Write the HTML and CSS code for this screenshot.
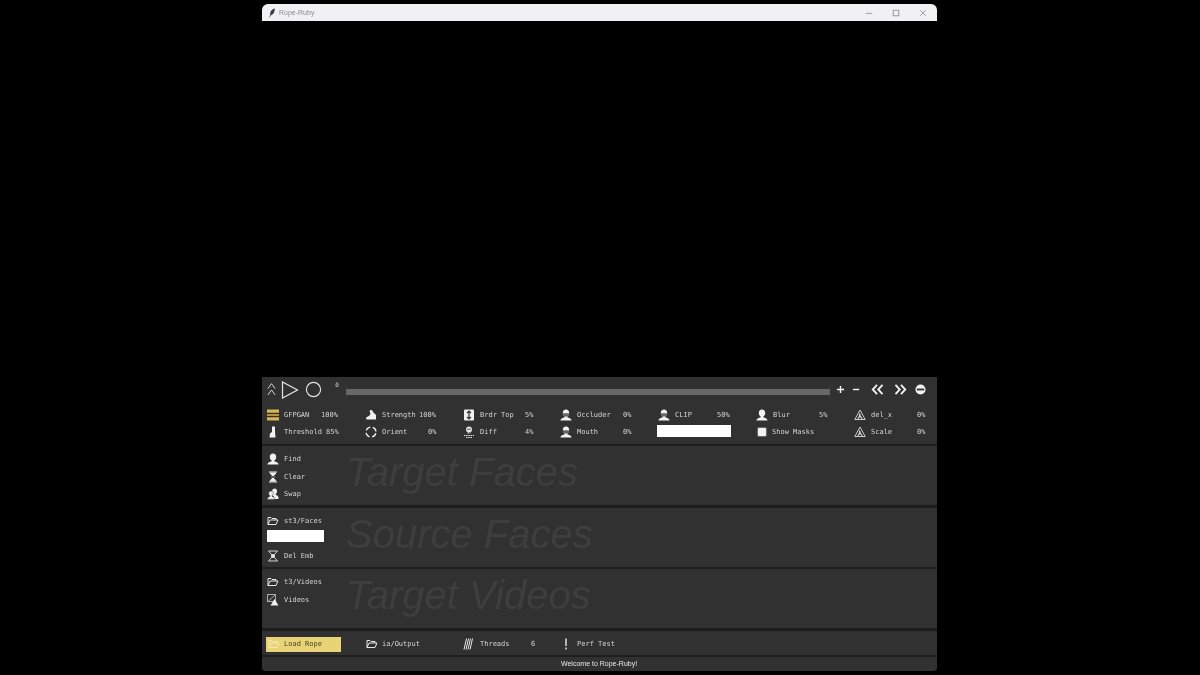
FILE: index.html
```html
<!DOCTYPE html>
<html lang="en">
<head>
<meta charset="utf-8">
<title>Rope-Ruby</title>
<link rel="stylesheet" href="styles.css">
</head>
<body>
<svg class="defs" width="0" height="0" aria-hidden="true">
  <symbol id="person" viewBox="0 0 12 12"><path fill="#f2f2f2" d="M6 .5c2 0 3.200 1.500 3.200 3.400 0 1.600-.8 2.900-1.800 3.400v.9c1.400.5 4.100 1.200 4.100 3.300H.5c0-2.100 2.700-2.800 4.100-3.300v-.9C3.600 6.800 2.800 5.500 2.800 3.900 2.800 2 4 .5 6 .5z"/></symbol>
  <symbol id="masked" viewBox="0 0 12 12"><path fill="#f2f2f2" d="M6 .5c2 0 3.200 1.500 3.200 3.400 0 1.600-.8 2.900-1.800 3.400v.9c1.400.5 4.100 1.200 4.100 3.300H.5c0-2.100 2.700-2.800 4.100-3.300v-.9C3.600 6.800 2.800 5.500 2.800 3.900 2.800 2 4 .5 6 .5z"/><path fill="#666" d="M3 4.200h6v2.300L6 7.800 3 6.500z"/></symbol>
  <symbol id="folder" viewBox="0 0 12 12"><path fill="none" stroke="#e8e8e8" stroke-width="1" d="M1 9.500V2.500h3l1 1h4v1.500M1 9.500l2-4.500h8l-2 4.500z"/></symbol>
  <symbol id="delta" viewBox="0 0 12 12"><path fill="none" stroke="#ddd" stroke-width=".9" d="M6 1 .8 10.500h10.400z"/><path fill="#ddd" d="M5 4.500h1.200l.5 2.500 2.300 2.800H7.500L6 8 4.500 9.800H3.300L5 7z"/></symbol>
  <symbol id="cross" viewBox="0 0 12 12"><path fill="none" stroke="#e8e8e8" stroke-width=".9" d="M1.500 1h9M1.500 11h9M1.500 1l9 10M10.500 1l-9 10"/><circle cx="6" cy="6" r="2" fill="#e8e8e8"/></symbol>
</svg>
<main class="window">
  <header class="titlebar">
    <div class="title">
      <svg class="feather" viewBox="0 0 10 12"><path fill="#3a3a48" d="M8.500.5C5 1 2.500 4 2.800 8L1.500 11.500l.6.2L3.300 9C6.500 8.500 8.500 5 8.500.5z"/></svg>
      <span class="txt">Rope-Ruby</span>
    </div>
    <div class="winbtns">
      <svg viewBox="0 0 10 10"><path stroke="#8a8a8a" d="M1 5.500h8"/></svg>
      <svg viewBox="0 0 10 10"><rect x="1.500" y="1.500" width="7" height="7" fill="none" stroke="#8a8a8a"/></svg>
      <svg viewBox="0 0 10 10"><path stroke="#8a8a8a" d="M1.500 1.500l7 7M8.500 1.500l-7 7"/></svg>
    </div>
  </header>

  <div class="video"></div>

  <section class="transport">
    <div class="play-group">
      <svg class="up" viewBox="0 0 10 16"><path fill="none" stroke="#e6e6e6" d="M1 7l4-5.500L9 7M1 14l4-5.500L9 14"/></svg>
      <svg class="play" viewBox="0 0 18 18"><path fill="none" stroke="#e6e6e6" stroke-width="1.200" d="M1.500 1 16.500 9 1.500 17z"/></svg>
      <svg class="rec" viewBox="0 0 18 18"><circle cx="9" cy="9" r="7.500" fill="none" stroke="#e6e6e6" stroke-width="1.200"/></svg>
    </div>
    <span class="frame txt">0</span>
    <div class="slider"></div>
    <div class="seek-group">
      <svg class="plus" viewBox="0 0 10 10"><path stroke="#f2f2f2" stroke-width="1.600" d="M1 5h8M5 1v8"/></svg>
      <svg class="minus" viewBox="0 0 10 10"><path stroke="#f2f2f2" stroke-width="1.600" d="M1 5h7"/></svg>
      <svg class="jump" viewBox="0 0 14 12"><path fill="none" stroke="#f2f2f2" stroke-width="2" d="M6.500 1 1.800 6l4.700 5M12.500 1 7.800 6l4.700 5"/></svg>
      <svg class="jump" viewBox="0 0 14 12"><path fill="none" stroke="#f2f2f2" stroke-width="2" d="M1.500 1l4.700 5-4.700 5M7.500 1l4.700 5-4.700 5"/></svg>
      <svg class="stop" viewBox="0 0 12 12"><circle cx="6" cy="6" r="5.500" fill="#f2f2f2"/><rect x="2" y="5" width="8" height="2" fill="#333"/></svg>
    </div>
  </section>

  <section class="params">
    <div class="param"><svg class="ic" viewBox="0 0 12 12"><rect width="12" height="11" y=".5" fill="#d8b45c"/><path stroke="#3a2c10" stroke-width="1.400" d="M0 4.500h12M0 7.500h12"/></svg><span class="lbl txt">GFPGAN</span><span class="val txt">100%</span></div>
    <div class="param"><svg class="ic" viewBox="0 0 12 12"><path fill="#f2f2f2" d="M4.500 1.500 7 1l1 2 3 3v4.500H1.500L1 8.500l3-1.500 1.500-2z"/></svg><span class="lbl txt">Strength</span><span class="val txt">100%</span></div>
    <div class="param"><svg class="ic" viewBox="0 0 12 12"><rect x="1" y=".5" width="10" height="11" rx="1" fill="#f2f2f2"/><path stroke="#333" stroke-width="1.200" d="M6 2v8M4 4l2-2 2 2M4 8l2 2 2-2" fill="none"/></svg><span class="lbl txt">Brdr Top</span><span class="val txt">5%</span></div>
    <div class="param"><svg class="ic"><use href="#masked"/></svg><span class="lbl txt">Occluder</span><span class="val txt">0%</span></div>
    <div class="param"><svg class="ic"><use href="#masked"/></svg><span class="lbl txt">CLIP</span><span class="val txt">50%</span></div>
    <div class="param"><svg class="ic"><use href="#person"/></svg><span class="lbl txt">Blur</span><span class="val txt">5%</span></div>
    <div class="param"><svg class="ic"><use href="#delta"/></svg><span class="lbl txt">del_x</span><span class="val txt">0%</span></div>

    <div class="param"><svg class="ic" viewBox="0 0 12 12"><path fill="#f2f2f2" d="M5 .5h3v5l.5 6h-6l.5-4 2-1.500z"/></svg><span class="lbl txt">Threshold</span><span class="val txt">85%</span></div>
    <div class="param"><svg class="ic" viewBox="0 0 12 12"><circle cx="6" cy="6" r="5" fill="none" stroke="#f2f2f2" stroke-width="1.300" stroke-dasharray="5.200 2.650" stroke-dashoffset="-1.325"/></svg><span class="lbl txt">Orient</span><span class="val txt">0%</span></div>
    <div class="param"><svg class="ic" viewBox="0 0 12 12"><circle cx="6" cy="3.500" r="3" fill="#e4e4e4"/><circle cx="5" cy="3.300" r=".7" fill="#333"/><circle cx="7" cy="3.300" r=".7" fill="#333"/><path stroke="#e4e4e4" stroke-width="1.100" d="M4.500 7h3M1 9.500h10M3 11.500h6" stroke-dasharray="1.500 .7"/></svg><span class="lbl txt">Diff</span><span class="val txt">4%</span></div>
    <div class="param"><svg class="ic"><use href="#masked"/></svg><span class="lbl txt">Mouth</span><span class="val txt">0%</span></div>
    <div class="param"><div class="input wide"></div></div>
    <div class="param"><span class="check-wrap"><span class="check"></span></span><span class="lbl txt">Show Masks</span></div>
    <div class="param"><svg class="ic"><use href="#delta"/></svg><span class="lbl txt">Scale</span><span class="val txt">0%</span></div>
  </section>

  <section class="panel">
    <div class="side">
      <div class="row"><svg class="ic"><use href="#person"/></svg><span class="txt">Find</span></div>
      <div class="row"><svg class="ic" viewBox="0 0 12 12"><path fill="none" stroke="#eee" d="M2 1h8M2 11h8"/><path fill="#eee" d="M2.500 1.500h7L7 6l2.500 4.500h-7L5 6z"/><path stroke="#333" stroke-width=".8" d="M3.500 3.500l5 5M8.500 3.500l-5 5"/></svg><span class="txt">Clear</span></div>
      <div class="row"><svg class="ic" viewBox="0 0 12 12"><path fill="#eee" d="M7.500.5c1.600 0 2.600 1.200 2.600 2.800 0 1.200-.6 2.200-1.300 2.600V7c1 .3 2.700 1 2.700 2.500V11H7V8.500L5 7V6C4.500 5.200 4.700.5 7.500.5z"/><path fill="#eee" stroke="#333" stroke-width=".5" d="M4 3c1.400 0 2.300 1 2.300 2.400 0 1-.5 1.800-1.100 2.200v.8c.9.300 2.300.8 2.300 2.100v.9H.5v-.9c0-1.300 1.400-1.800 2.300-2.100v-.8c-.6-.4-1.100-1.200-1.100-2.200C1.700 4 2.600 3 4 3z"/></svg><span class="txt">Swap</span></div>
    </div>
    <div class="ghost txt">Target Faces</div>
  </section>

  <section class="panel">
    <div class="side">
      <div class="row"><svg class="ic"><use href="#folder"/></svg><span class="txt">st3/Faces</span></div>
      <div class="row"><div class="input narrow"></div></div>
      <div class="row"><svg class="ic"><use href="#cross"/></svg><span class="txt">Del Emb</span></div>
    </div>
    <div class="ghost txt">Source Faces</div>
  </section>

  <section class="panel panel-videos">
    <div class="side">
      <div class="row"><svg class="ic"><use href="#folder"/></svg><span class="txt">t3/Videos</span></div>
      <div class="row"><svg class="ic" viewBox="0 0 12 12"><rect x=".5" y=".5" width="8" height="7" fill="none" stroke="#aaa"/><path stroke="#aaa" d="M1 7.500 8 1"/><path fill="#eee" d="M7.500 5 11.500 11.500h-8z"/></svg><span class="txt">Videos</span></div>
    </div>
    <div class="ghost txt">Target Videos</div>
  </section>

  <section class="actions">
    <div class="action load"><svg class="ic" viewBox="0 0 12 12"><path fill="none" stroke="#f4e8b0" d="M1 9.500V2.500h3l1 1h4v1.500M1 9.500l2-4.500h8l-2 4.500z"/></svg><span class="txt">Load Rope</span></div>
    <div class="action output"><svg class="ic"><use href="#folder"/></svg><span class="txt">ia/Output</span></div>
    <div class="action threads"><svg class="ic" viewBox="0 0 12 12"><path stroke="#e8e8e8" stroke-width="1" d="M4.500.5 2 11.500M6.500.5 4 11.500M8.500.5 6 11.500M10.500.5 8 11.500"/></svg><span class="lbl txt">Threads</span><span class="val txt">6</span></div>
    <div class="action perf"><svg class="ic" viewBox="0 0 12 12"><path stroke="#eee" stroke-width="1.400" d="M6 .5v7.500M6 9.500v2"/></svg><span class="txt">Perf Test</span></div>
  </section>

  <footer class="status"><span class="txt">Welcome to Rope-Ruby!</span></footer>
</main>
</body>
</html>
```
FILE: styles.css
```css
* { box-sizing: border-box; }
html, body { margin: 0; height: 100%; }
body {
  background: #000;
  padding: 4px 263px 4px 262px;
  font-family: "DejaVu Sans Mono", "Liberation Mono", monospace;
  font-size: 7px;
  color: #d4d4d4;
  overflow: hidden;
}
.defs { position: absolute; }
svg { display: block; flex: none; }
.txt { will-change: transform; }
.window {
  width: 675px;
  height: 667px;
  display: flex;
  flex-direction: column;
  background: #1e1e1e;
  border-radius: 6px 6px 4px 4px;
  overflow: hidden;
  filter: blur(.35px);
}
.titlebar {
  height: 17px;
  flex: none;
  background: #f1f1f3;
  display: flex;
  align-items: center;
  justify-content: space-between;
  padding: 0 10px 0 6px;
}
.title { display: flex; align-items: center; gap: 3px; font: 7px "Liberation Sans", sans-serif; color: #8c8c8c; }
.feather { width: 8px; height: 10px; }
.winbtns { display: flex; gap: 19px; }
.winbtns svg { width: 8px; height: 8px; }
.video { height: 356px; flex: none; background: #000; }
.transport {
  height: 25px;
  flex: none;
  background: #313131;
  display: flex;
  align-items: center;
  padding: 0 9px 0 5px;
}
.play-group { display: flex; align-items: center; }
.up { width: 9px; height: 15px; }
.play { width: 18px; height: 18px; margin-left: 5px; }
.rec { width: 17px; height: 17px; margin-left: 6px; }
.frame { width: 10px; margin: -10px 0 0 10px; text-align: center; font-size: 6px; }
.slider { width: 484px; height: 6px; margin: 4px 0 0 4px; background: #676767; flex: none; }
.seek-group { display: flex; align-items: center; margin-left: 6px; }
.plus { width: 9px; height: 9px; }
.minus { width: 9px; height: 9px; margin-left: 7px; }
.jump { width: 13px; height: 11px; margin-left: 10px; }
.jump + .jump { margin-left: 10px; }
.stop { width: 11px; height: 11px; margin-left: 8px; }
.params {
  height: 42px;
  flex: none;
  background: #313131;
  display: grid;
  grid-template-columns: repeat(7, 97.8px);
  grid-template-rows: repeat(2, 17px);
  align-content: center;
  padding: 0 0 0 5px;
}
.param { display: flex; align-items: center; padding-right: 26.5px; }
.param .lbl { margin-left: 5px; }
.param .val { margin-left: auto; }
.ic { width: 12px; height: 12px; }
.lbl { white-space: pre; }
.input { background: #fff; flex: none; }
.wide { width: 74px; height: 12px; margin: 0 0 1px -1px; }
.narrow { width: 57px; height: 12px; margin-bottom: 6px; }
.check-wrap { width: 12px; display: flex; justify-content: center; }
.check-wrap + .lbl { margin-left: 4px; }
.check { width: 8px; height: 8px; background: #f0f0f0; border-radius: 1px; box-shadow: 0 0 0 1px #666; }
.panel {
  height: 59px;
  flex: none;
  margin-top: 3px;
  background: #313131;
  display: flex;
}
.params + .panel { margin-top: 2px; }
.panel-videos { margin-top: 2px; }
.side { width: 85px; flex: none; padding: 4.5px 0 0 5px; display: flex; flex-direction: column; }
.row { height: 17.5px; display: flex; align-items: center; gap: 5px; flex: none; }
.ghost {
  font: italic 40px/52px "Liberation Sans", sans-serif;
  color: #3e3e3e;
  white-space: nowrap;
  margin-left: -1px;
}
.actions {
  height: 24px;
  flex: none;
  margin-top: 3px;
  padding: 2px 0 0 4px;
  background: #313131;
  display: flex;
  align-items: center;
}
.action { display: flex; align-items: center; gap: 4px; }
.load {
  width: 75px;
  height: 15px;
  padding-left: 2px;
  background: #e8d476;
  color: #4a431f;
}
.output { margin-left: 25px; width: 96px; }
.threads { width: 98px; gap: 6px; }
.threads .val { margin-left: 15px; }
.perf { gap: 5px; }
.status {
  height: 14px;
  flex: none;
  margin-top: 2px;
  background: #313131;
  text-align: center;
  font: 7px/14px "Liberation Sans", sans-serif;
  color: #e6e6e6;
}
.status .txt { display: inline-block; }
```
